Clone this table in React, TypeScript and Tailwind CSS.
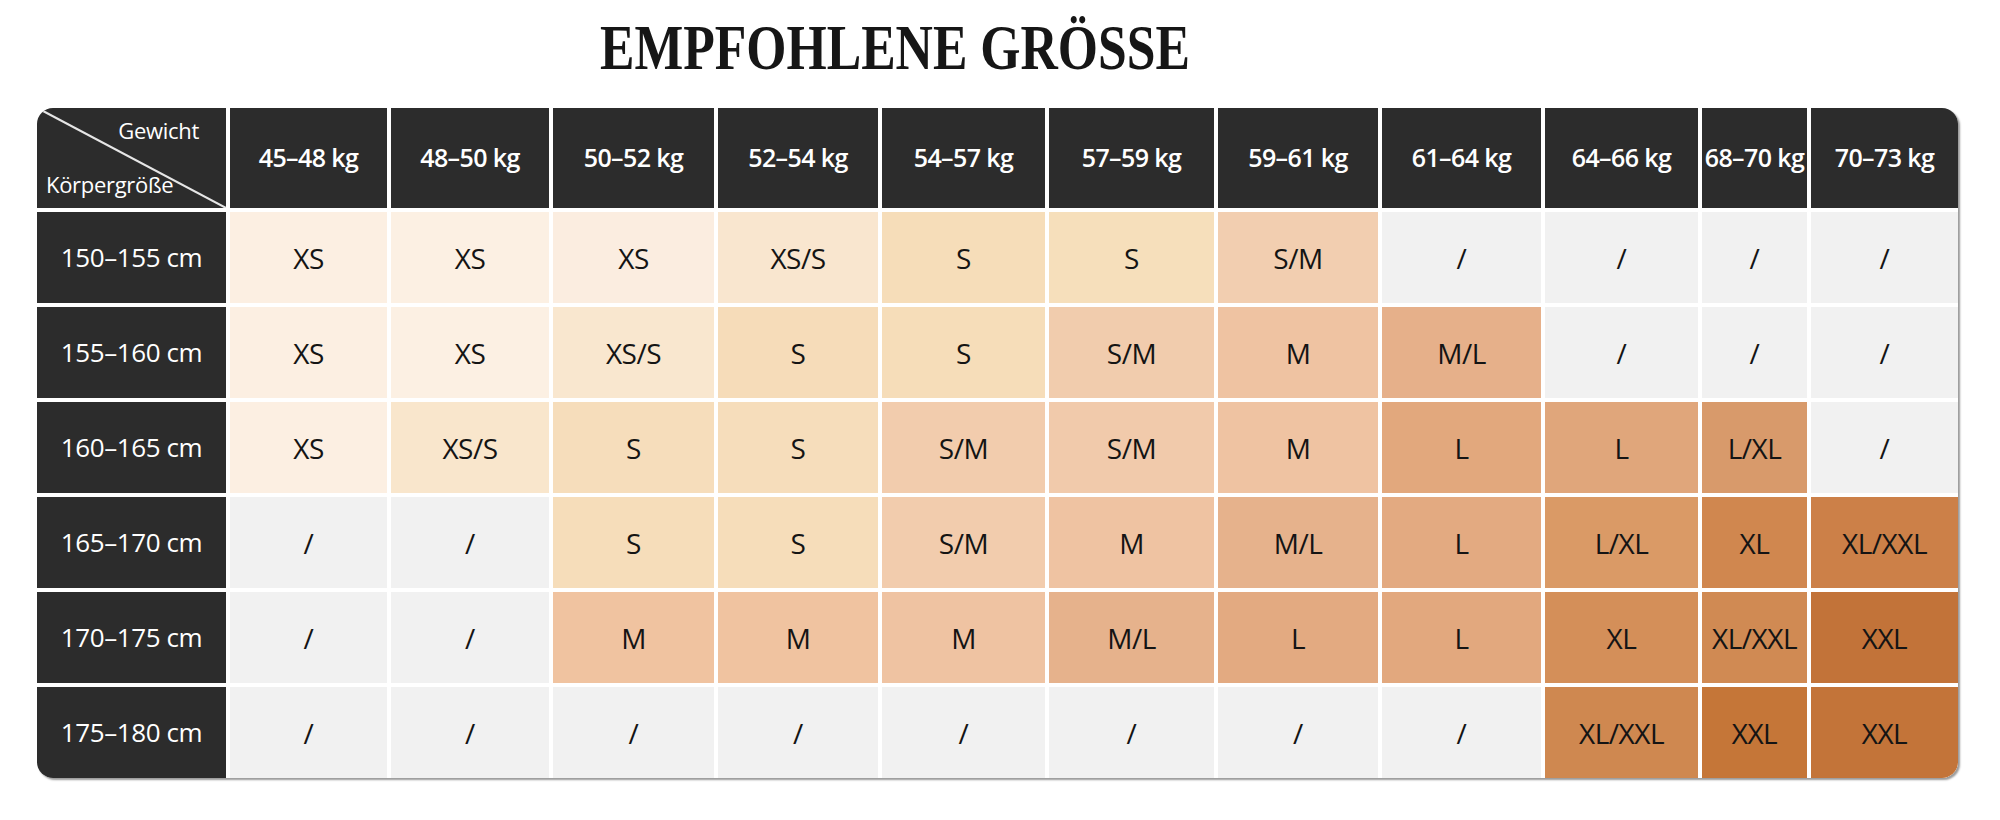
const weights = ['45–48 kg', '48–50 kg', '50–52 kg', '52–54 kg', '54–57 kg', '57–59 kg', '59–61 kg', '61–64 kg', '64–66 kg', '68–70 kg', '70–73 kg'];

const NA = '#f1f1f1';

// [size, colour] per cell
const rows: { label: string; cells: [string, string][] }[] = [
  {
    label: '150–155 cm',
    cells: [
      ['XS', '#fcefe2'], ['XS', '#fcf0e3'], ['XS', '#fbede0'], ['XS/S', '#f9e6cf'], ['S', '#f6ddb9'], ['S', '#f6dfbb'],
      ['S/M', '#f2ceb0'], ['/', NA], ['/', NA], ['/', NA], ['/', NA],
    ],
  },
  {
    label: '155–160 cm',
    cells: [
      ['XS', '#fcefe2'], ['XS', '#fcf0e3'], ['XS/S', '#f9e7cf'], ['S', '#f6dcb9'], ['S', '#f6ddb9'], ['S/M', '#f1ccad'],
      ['M', '#efc3a2'], ['M/L', '#e6b08a'], ['/', NA], ['/', NA], ['/', NA],
    ],
  },
  {
    label: '160–165 cm',
    cells: [
      ['XS', '#fcefe2'], ['XS/S', '#f9e6cc'], ['S', '#f6ddbb'], ['S', '#f6ddbb'], ['S/M', '#f2ccad'], ['S/M', '#f1caab'],
      ['M', '#efc3a2'], ['L', '#e2a87d'], ['L', '#e0a67b'], ['L/XL', '#d89a6b'], ['/', NA],
    ],
  },
  {
    label: '165–170 cm',
    cells: [
      ['/', NA], ['/', NA], ['S', '#f6ddba'], ['S', '#f6ddba'], ['S/M', '#f2ccad'], ['M', '#efc3a2'],
      ['M/L', '#e6b28c'], ['L', '#e3aa81'], ['L/XL', '#da9a66'], ['XL', '#d0874f'], ['XL/XXL', '#cc8048'],
    ],
  },
  {
    label: '170–175 cm',
    cells: [
      ['/', NA], ['/', NA], ['M', '#f0c3a0'], ['M', '#f0c3a0'], ['M', '#efc3a2'], ['M/L', '#e6b28c'],
      ['L', '#e3aa81'], ['L', '#e2a87e'], ['XL', '#d48f59'], ['XL/XXL', '#d08a53'], ['XXL', '#c27339'],
    ],
  },
  {
    label: '175–180 cm',
    cells: [
      ['/', NA], ['/', NA], ['/', NA], ['/', NA], ['/', NA], ['/', NA],
      ['/', NA], ['/', NA], ['XL/XXL', '#cf8850'], ['XXL', '#c57638'], ['XXL', '#c37439'],
    ],
  },
];

export default function App() {
  return (
    <div className="w-[2000px] h-[820px] bg-white pt-[17px]" style={{ fontFamily: '"Open Sans", "Noto Sans", sans-serif' }}>
      <div className="h-[63px] pl-[600px] leading-none">
        <h1
          className="inline-block origin-left scale-x-[0.82] text-[63px] font-bold leading-none text-[#161616] whitespace-nowrap"
          style={{ fontFamily: '"Liberation Serif", "Times New Roman", serif' }}
        >
          EMPFOHLENE GRÖSSE
        </h1>
      </div>

      <div className="ml-[37px] mt-[28px] w-[1921px] rounded-[16px] shadow-[2px_2px_2px_rgba(0,0,0,0.4)]">
        <div className="grid grid-cols-[189px_157px_158px_161px_160px_163px_165px_160px_159px_153px_105px_147px] grid-rows-[100px_repeat(6,91px)] gap-[4px] bg-white rounded-[16px] overflow-hidden">
          {/* corner cell */}
          <div className="relative bg-[#2c2c2c] text-white text-[22px] font-medium">
            <svg className="absolute inset-0 w-full h-full" viewBox="0 0 189 100" preserveAspectRatio="none">
              <line x1="6" y1="3" x2="189" y2="100" stroke="#e6e6e6" strokeWidth="2" />
            </svg>
            <span className="absolute right-[27px] top-[7px] leading-[30px] tracking-[-0.3px]">Gewicht</span>
            <span className="absolute left-[9px] top-[61px] leading-[30px] tracking-[-0.3px]">Körpergröße</span>
          </div>
          {weights.map((w) => (
            <div key={w} className="flex items-center justify-center bg-[#2c2c2c] text-white text-[25px] font-semibold whitespace-nowrap tracking-[-0.6px]">
              {w}
            </div>
          ))}

          {rows.map((r) => (
            <>
              <div key={r.label} className="flex items-center justify-center bg-[#2c2c2c] text-white text-[26px] font-medium whitespace-nowrap tracking-[-0.4px]">
                {r.label}
              </div>
              {r.cells.map(([size, bg], i) => (
                <div
                  key={r.label + i}
                  className="flex items-center justify-center text-[28px] text-[#141414] whitespace-nowrap tracking-[-0.5px]"
                  style={{ backgroundColor: bg }}
                >
                  {size}
                </div>
              ))}
            </>
          ))}
        </div>
      </div>
    </div>
  );
}
